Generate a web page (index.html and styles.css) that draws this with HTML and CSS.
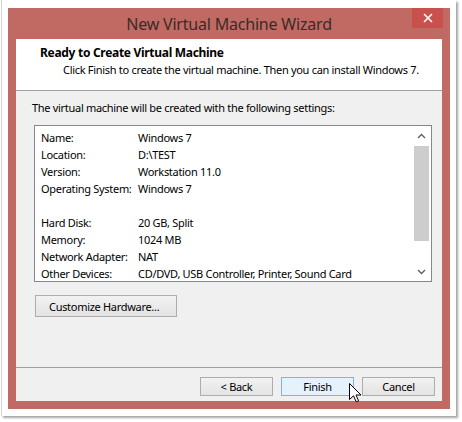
FILE: index.html
```html
<!DOCTYPE html>
<html>
<head>
<meta charset="utf-8">
<link rel="stylesheet" href="styles.css">
</head>
<body>
<div class="frame">
  <div class="win">
    <div class="titlebar">
      <div class="title">New Virtual Machine Wizard</div>
      <div class="close"><svg width="10" height="10" viewBox="0 0 10 10"><path d="M1 1L9 9M9 1L1 9" stroke="#fff" stroke-width="1.6"/></svg></div>
    </div>
    <div class="client">
      <div class="header">
        <div class="h-title">Ready to Create Virtual Machine</div>
        <div class="h-sub">Click Finish to create the virtual machine. Then you can install Windows 7.</div>
      </div>
      <div class="body">
        <div class="desc">The virtual machine will be created with the following settings:</div>
        <div class="listbox">
          <div class="rows">
            <div class="row"><span class="k">Name:</span><span>Windows 7</span></div>
            <div class="row"><span class="k">Location:</span><span>D:\TEST</span></div>
            <div class="row"><span class="k">Version:</span><span>Workstation 11.0</span></div>
            <div class="row"><span class="k">Operating System:</span><span>Windows 7</span></div>
            <div class="row"></div>
            <div class="row"><span class="k">Hard Disk:</span><span>20 GB, Split</span></div>
            <div class="row"><span class="k">Memory:</span><span>1024 MB</span></div>
            <div class="row"><span class="k">Network Adapter:</span><span>NAT</span></div>
            <div class="row"><span class="k">Other Devices:</span><span>CD/DVD, USB Controller, Printer, Sound Card</span></div>
          </div>
          <div class="scroll">
            <div class="arrow"><svg width="9" height="6" viewBox="0 0 9 6"><path d="M1 5L4.5 1.5L8 5" fill="none" stroke="#606060" stroke-width="1.4"/></svg></div>
            <div class="thumb"></div>
            <div class="arrow"><svg width="9" height="6" viewBox="0 0 9 6"><path d="M1 1L4.5 4.5L8 1" fill="none" stroke="#606060" stroke-width="1.4"/></svg></div>
          </div>
        </div>
        <div class="btn custom">Customize Hardware...</div>
      </div>
      <div class="footer">
        <div class="btn">&lt; Back</div>
        <div class="btn hover">Finish
          <svg class="cursor" width="13" height="20" viewBox="0 0 13 20"><path d="M0.5 0.5L0.5 16.5L4.5 12.8L7.2 18.8L9.6 17.8L7 12L12 12Z" fill="#fff" stroke="#000" stroke-width="1"/></svg>
        </div>
        <div class="btn">Cancel</div>
      </div>
    </div>
  </div>
</div>
</body>
</html>
```

FILE: styles.css
```css
html, body {
  margin: 0;
  padding: 0;
  background: #ffffff;
}
body {
  width: 462px;
  height: 422px;
  overflow: hidden;
  font-family: "Segoe UI", "Noto Sans", "Open Sans", sans-serif;
  font-size: 11px;
  letter-spacing: -0.3px;
  color: #000;
}
.frame {
  margin-left: 1px;
  width: 455px;
  height: 416px;
  border-left: 1px solid #d4d4d4;
  box-shadow: 2px 2px 2px rgba(0,0,0,0.35);
  padding: 8px 0 0 6px;
  box-sizing: border-box;
  background: #fff;
}
.win {
  width: 442px;
  height: 401px;
  background: #c16a63;
  padding: 0 8px 8px 8px;
  box-sizing: border-box;
  display: flex;
  flex-direction: column;
}
.titlebar {
  height: 31px;
  position: relative;
  display: flex;
  align-items: center;
  justify-content: center;
}
.title {
  font-size: 16px;
  letter-spacing: -0.2px;
  color: #3a2a28;
}
.close {
  position: absolute;
  right: -1px;
  top: 0;
  width: 31px;
  height: 20px;
  background: #c9514d;
  display: flex;
  align-items: center;
  justify-content: center;
}
.client {
  flex: 1;
  display: flex;
  flex-direction: column;
  background: #f0f0f0;
}
.header {
  height: 46px;
  background: #fff;
  border-bottom: 1px solid #a0a0a0;
  padding: 5px 0 0 24px;
  box-sizing: content-box;
}
.h-title {
  font-weight: bold;
  font-size: 12px;
  line-height: 17px;
}
.h-sub {
  padding-left: 23px;
  line-height: 17px;
}
.body {
  flex: 1;
  padding: 9px 10px 0 16px;
  border-bottom: 1px solid #a0a0a0;
}
.desc {
  line-height: 16px;
}
.listbox {
  margin: 9px 0 0 2px;
  width: 398px;
  height: 157px;
  box-sizing: border-box;
  border: 1px solid #828790;
  background: #fff;
  display: flex;
  justify-content: space-between;
}
.rows {
  padding: 3px 0 0 6px;
}
.row {
  height: 17px;
  line-height: 17px;
  display: flex;
  white-space: nowrap;
}
.k {
  width: 97px;
}
.scroll {
  width: 15px;
  margin: 1px 2px 1px 0;
  display: flex;
  flex-direction: column;
}
.arrow {
  height: 17px;
  display: flex;
  align-items: center;
  justify-content: center;
}
.thumb {
  flex: 1;
  background: #cdcdcd;
  margin: 2px 0 22px 0;
}
.btn {
  height: 19px;
  box-sizing: border-box;
  border: 1px solid #adadad;
  background: linear-gradient(#f2f2f2, #e3e3e3);
  display: flex;
  align-items: center;
  justify-content: center;
  position: relative;
}
.custom {
  margin: 13px 0 0 3px;
  width: 142px;
  height: 22px;
  justify-content: flex-start;
  padding-left: 13px;
}
.footer {
  height: 33px;
  display: flex;
  justify-content: flex-end;
  gap: 8px;
  padding: 9px 7px 0 0;
  box-sizing: border-box;
}
.footer .btn {
  width: 73px;
}
.hover {
  background: #e5f1fb;
  border-color: #7eb4ea;
}
.cursor {
  position: absolute;
  left: 67px;
  top: 5px;
}
```
